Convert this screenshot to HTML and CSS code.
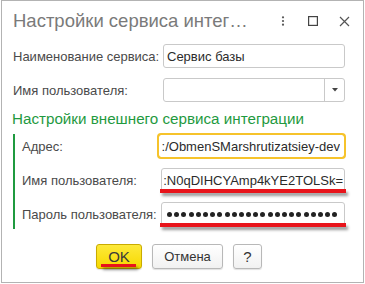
FILE: index.html
```html
<!DOCTYPE html>
<html lang="ru">
<head>
<meta charset="utf-8">
<link rel="stylesheet" href="styles.css">
</head>
<body>
<div class="window">
  <div class="titlebar">
    <span class="title">Настройки сервиса интег…</span>
    <span class="tool kebab"><svg width="4" height="10" viewBox="0 0 4 10"><circle cx="2" cy="1.3" r="1.1" fill="#555"/><circle cx="2" cy="5" r="1.1" fill="#555"/><circle cx="2" cy="8.7" r="1.1" fill="#555"/></svg></span>
    <span class="tool square"><svg width="10" height="10" viewBox="0 0 10 10"><rect x="0.6" y="0.6" width="8.8" height="8.8" fill="none" stroke="#444" stroke-width="1.2"/></svg></span>
    <span class="tool close"><svg width="11" height="11" viewBox="0 0 11 11"><path d="M1 1 L10 10 M10 1 L1 10" stroke="#555" stroke-width="1.2" fill="none"/></svg></span>
  </div>
  <div class="form">
    <div class="row">
      <span class="lbl lbl-main">Наименование сервиса:</span>
      <div class="field"><span class="val">Сервис базы</span></div>
    </div>
    <div class="row row-last">
      <span class="lbl lbl-main">Имя пользователя:</span>
      <div class="field select"><span class="val"></span><span class="drop"><svg width="6" height="4" viewBox="0 0 6 4"><path d="M0 0 H6 L3 3.5 Z" fill="#444"/></svg></span></div>
    </div>
    <div class="section-title">Настройки внешнего сервиса интеграции</div>
    <div class="group">
      <div class="row">
        <span class="lbl lbl-sub">Адрес:</span>
        <div class="field focused right"><span class="val">:/ObmenSMarshrutizatsiey-dev</span></div>
      </div>
      <div class="row">
        <span class="lbl lbl-sub">Имя пользователя:</span>
        <div class="field right tight marked"><span class="val">:N0qDIHCYAmp4kYE2TOLSk=</span><span class="redline"></span></div>
      </div>
      <div class="row row-end">
        <span class="lbl lbl-sub">Пароль пользователя:</span>
        <div class="field marked"><span class="dots"><i></i><i></i><i></i><i></i><i></i><i></i><i></i><i></i><i></i><i></i><i></i><i></i><i></i><i></i><i></i><i></i><i></i><i></i><i></i><i></i><i></i><i></i><i></i><i></i></span><span class="redline"></span></div>
      </div>
    </div>
    <div class="buttons">
      <button class="btn btn-ok">OK<span class="redline ok-line"></span></button>
      <button class="btn btn-cancel">Отмена</button>
      <button class="btn btn-help">?</button>
    </div>
  </div>
</div>
</body>
</html>
```
FILE: styles.css
```css
* { box-sizing: border-box; }
html, body { margin: 0; padding: 0; background: #fff; }
body { font-family: "Liberation Sans", Arial, sans-serif; }

.window {
  margin-left: 1px;
  width: 363px;
  height: 283px;
  border: 1px solid #b3b3b3;
  background: #fff;
}

.titlebar {
  height: 38px;
  padding: 2px 13px 0 11px;
  display: flex;
  align-items: center;
}
.title {
  flex: 1;
  font-size: 18.5px;
  line-height: 22px;
  color: #7a7a7a;
  white-space: nowrap;
}
.tool { display: flex; align-items: center; }
.kebab { margin-right: 23px; }
.square { margin-right: 21px; }

.form {
  padding: 5px 18px 0 10px;
  display: flex;
  flex-direction: column;
}
.row {
  display: flex;
  align-items: center;
  height: 24px;
  margin-bottom: 10px;
}
.row-last { margin-bottom: 8px; }
.row-end { margin-bottom: 0; }

.lbl {
  font-size: 13px;
  color: #4a4a4a;
  white-space: nowrap;
}
.lbl-main { width: 151px; padding-left: 1px; }
.lbl-sub { width: 139px; }

.field {
  position: relative;
  flex: 1;
  height: 24px;
  border: 1px solid #c9c9c9;
  border-radius: 3px;
  display: flex;
  align-items: center;
  padding: 0 3px;
  font-size: 13px;
  color: #2b2b2b;
  white-space: nowrap;
}
.field .val { flex: 1; overflow: hidden; }
.field.right .val { text-align: right; }
.field.tight { padding: 0 1px 0 0; }
.field.focused {
  border-color: #f6c32b;
  outline: 2px solid #f6c32b;
  outline-offset: -1px;
  padding-right: 4px;
}
.select { padding-right: 0; }
.drop {
  width: 20px;
  height: 100%;
  border-left: 1px solid #c9c9c9;
  display: flex;
  align-items: center;
  justify-content: center;
}

.section-title {
  font-size: 15.2px;
  line-height: 18px;
  color: #1f9a3f;
  margin-bottom: 6px;
  white-space: nowrap;
}

.group {
  margin-left: 1px;
  border-left: 2px solid #1f9a3f;
  padding: 0 0 3px 7px;
}

.dots {
  display: flex;
  gap: 2.2px;
  padding-left: 2px;
}
.dots i {
  display: block;
  width: 5px;
  height: 5px;
  border-radius: 50%;
  background: #222;
}

.redline {
  position: absolute;
  left: -2px;
  right: -2px;
  bottom: -2px;
  height: 4px;
  background: #e8141b;
  box-shadow: 2px 3px 3px rgba(0, 0, 0, 0.4);
}

.buttons {
  margin-top: 15px;
  display: flex;
  justify-content: center;
  gap: 10px;
  padding-left: 1px;
}
.btn {
  position: relative;
  height: 25px;
  border: 1px solid #b8b8b8;
  border-radius: 3px;
  background: linear-gradient(#ffffff, #f1f1f1);
  font-family: "Liberation Sans", Arial, sans-serif;
  font-size: 13px;
  color: #333;
  padding: 0;
  box-shadow: 0 1px 1px rgba(0, 0, 0, 0.12);
}
.btn-ok {
  width: 46px;
  font-size: 15px;
  background: linear-gradient(#fde93a, #f7d900);
  border-color: #c9ab00;
  color: #3a3a3a;
}
.btn-cancel { width: 71px; }
.btn-help { width: 29px; font-size: 15px; }
.ok-line {
  left: 4px;
  right: 5px;
  bottom: 1px;
  height: 3px;
}
```
